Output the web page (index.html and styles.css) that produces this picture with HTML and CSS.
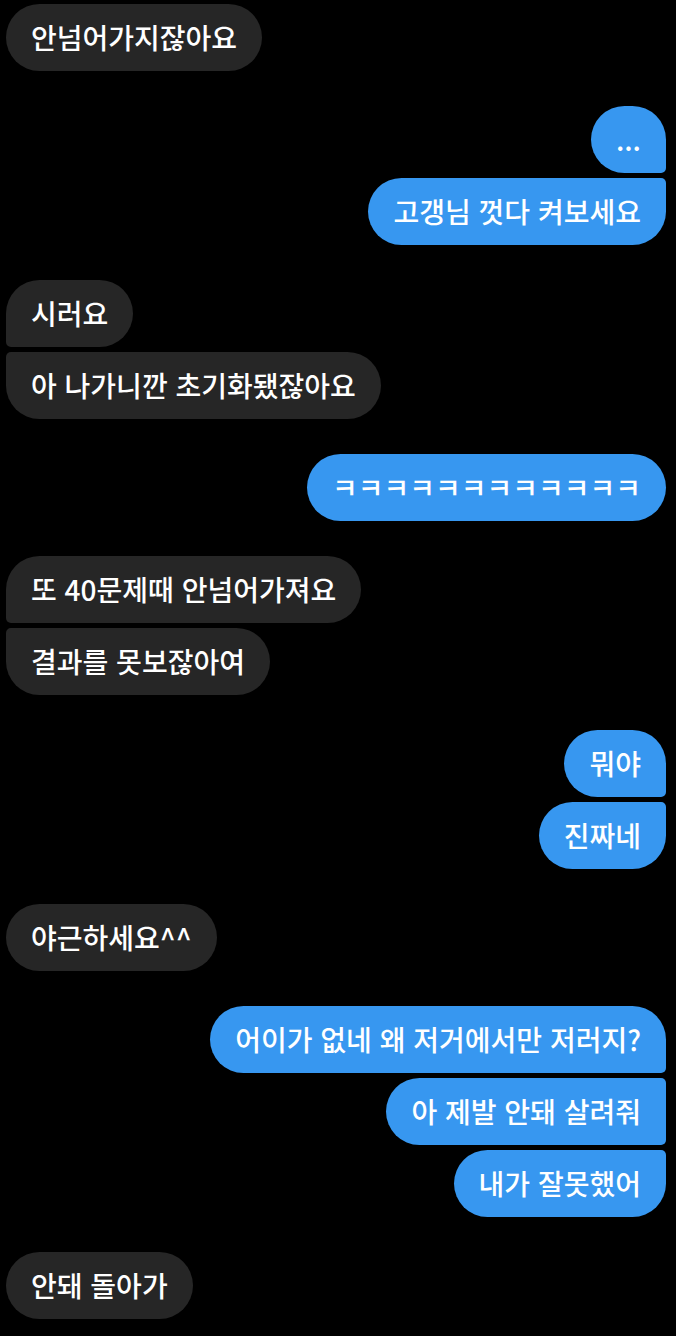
FILE: index.html
```html
<!DOCTYPE html>
<html lang="ko">
<head>
    <meta charset="UTF-8">
    <meta name="viewport" content="width=device-width, initial-scale=1.0">
    <title>Chat</title>
    <link rel="stylesheet" href="styles.css">
</head>
<body>

<div class="chat">
    <div class="group them">
        <div class="bubble">안넘어가지잖아요</div>
    </div>

    <div class="group me">
        <div class="bubble">...</div>
        <div class="bubble">고갱님 껏다 켜보세요</div>
    </div>

    <div class="group them">
        <div class="bubble">시러요</div>
        <div class="bubble">아 나가니깐 초기화됐잖아요</div>
    </div>

    <div class="group me">
        <div class="bubble">ㅋㅋㅋㅋㅋㅋㅋㅋㅋㅋㅋㅋ</div>
    </div>

    <div class="group them">
        <div class="bubble">또 40문제때 안넘어가져요</div>
        <div class="bubble">결과를 못보잖아여</div>
    </div>

    <div class="group me">
        <div class="bubble">뭐야</div>
        <div class="bubble">진짜네</div>
    </div>

    <div class="group them">
        <div class="bubble">야근하세요^^</div>
    </div>

    <div class="group me">
        <div class="bubble">어이가 없네 왜 저거에서만 저러지?</div>
        <div class="bubble">아 제발 안돼 살려줘</div>
        <div class="bubble">내가 잘못했어</div>
    </div>

    <div class="group them">
        <div class="bubble">안돼 돌아가</div>
    </div>
</div>

</body>
</html>
```

FILE: styles.css
```css
/* Page */
body {
    margin: 0;
    background: #000;
    font-family: "Noto Sans CJK KR", "Noto Sans", sans-serif;
    color: #fff;
}

.chat {
    display: flex;
    flex-direction: column;
    gap: 35px;
    padding: 4px 10px 16px 6px;
}

/* Message groups */
.group {
    display: flex;
    flex-direction: column;
    gap: 5px;
}

.them {
    align-items: flex-start;
}

.me {
    align-items: flex-end;
}

/* Bubbles */
.bubble {
    font-size: 28px;
    font-weight: 500;
    line-height: 31px;
    padding: 18px 25px;
    border-radius: 34px;
    white-space: nowrap;
}

.them .bubble {
    background: #262626;
}

.me .bubble {
    background: #3797f0;
}

/* squared corners where bubbles of one group touch */
.them .bubble:not(:last-child) {
    border-bottom-left-radius: 5px;
}

.them .bubble:not(:first-child) {
    border-top-left-radius: 5px;
}

.me .bubble:not(:last-child) {
    border-bottom-right-radius: 5px;
}

.me .bubble:not(:first-child) {
    border-top-right-radius: 5px;
}
```
